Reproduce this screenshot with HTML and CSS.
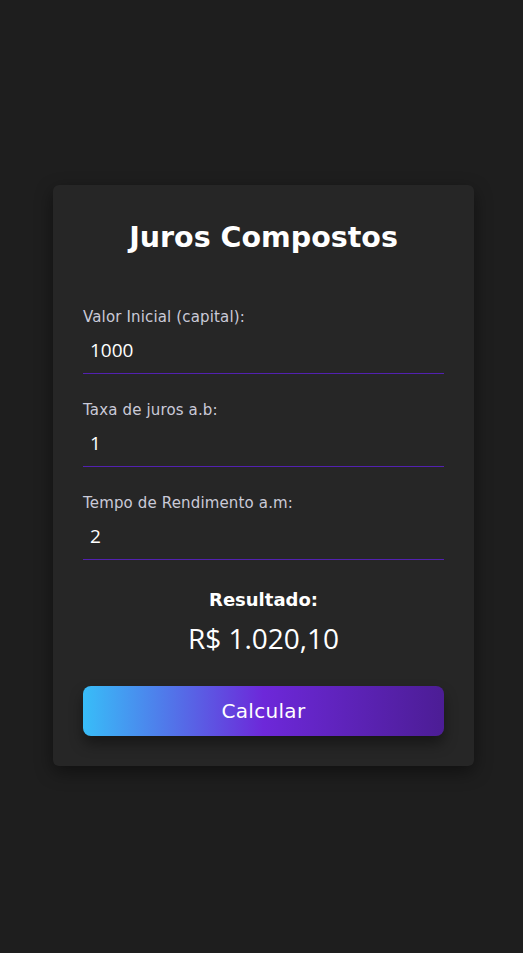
FILE: index.html
```html
<!DOCTYPE html>
<html lang="pt-BR">
<head>
<meta charset="utf-8">
<title>Juros Compostos</title>
<link rel="stylesheet" href="styles.css">
</head>
<body>
<main class="card">
  <h1 class="title">Juros Compostos</h1>
  <div class="field">
    <label class="label" for="capital">Valor Inicial (capital):</label>
    <input class="input" id="capital" type="text" value="1000">
  </div>
  <div class="field">
    <label class="label" for="taxa">Taxa de juros a.b:</label>
    <input class="input" id="taxa" type="text" value="1">
  </div>
  <div class="field">
    <label class="label" for="tempo">Tempo de Rendimento a.m:</label>
    <input class="input" id="tempo" type="text" value="2">
  </div>
  <div class="result">
    <div class="result-label">Resultado:</div>
    <div class="result-value">R$ 1.020,10</div>
  </div>
  <button class="button" type="button">Calcular</button>
</main>
</body>
</html>
```
FILE: styles.css
```css
* { box-sizing: border-box; }
html, body { margin: 0; padding: 0; }
body {
  background: #1e1e1e;
  font-family: "DejaVu Sans", sans-serif;
  color: #fff;
  min-height: 100vh;
  display: flex;
  align-items: center;
  justify-content: center;
}
.card {
  width: 421px;
  margin: -2px 0 0 4px;
  background: #262626;
  border-radius: 6px;
  padding: 35px 30px 30px;
  box-shadow: 0 6px 18px rgba(0,0,0,0.45);
  display: flex;
  flex-direction: column;
}
.title {
  margin: 0 0 52px;
  text-align: center;
  font-size: 28.5px;
  line-height: 36px;
  font-weight: 700;
}
.field {
  display: flex;
  flex-direction: column;
  margin-bottom: 27px;
}
.label {
  font-size: 15px;
  line-height: 18px;
  letter-spacing: 0.15px;
  color: #cacad8;
  margin-bottom: 6px;
}
.input {
  background: transparent;
  border: none;
  border-bottom: 1px solid #5221b0;
  color: #fff;
  font-family: "Open Sans", sans-serif;
  font-size: 19px;
  line-height: 26px;
  height: 42px;
  padding: 5px 7px 10px;
  outline: none;
}
.result {
  text-align: center;
  margin-top: 1px;
}
.result-label {
  font-size: 18px;
  line-height: 24px;
  font-weight: 700;
}
.result-value {
  font-family: "Open Sans", sans-serif;
  font-size: 28px;
  line-height: 40px;
  margin-top: 6px;
}
.button {
  margin-top: 28px;
  height: 50px;
  border: none;
  border-radius: 8px;
  background: linear-gradient(90deg, #38bdf8 0%, #6d28d9 50%, #4c1d95 100%);
  color: #fff;
  font-family: "DejaVu Sans", sans-serif;
  font-size: 20px;
  letter-spacing: 0.3px;
  box-shadow: 0 8px 14px rgba(0,0,0,0.4);
}
```
